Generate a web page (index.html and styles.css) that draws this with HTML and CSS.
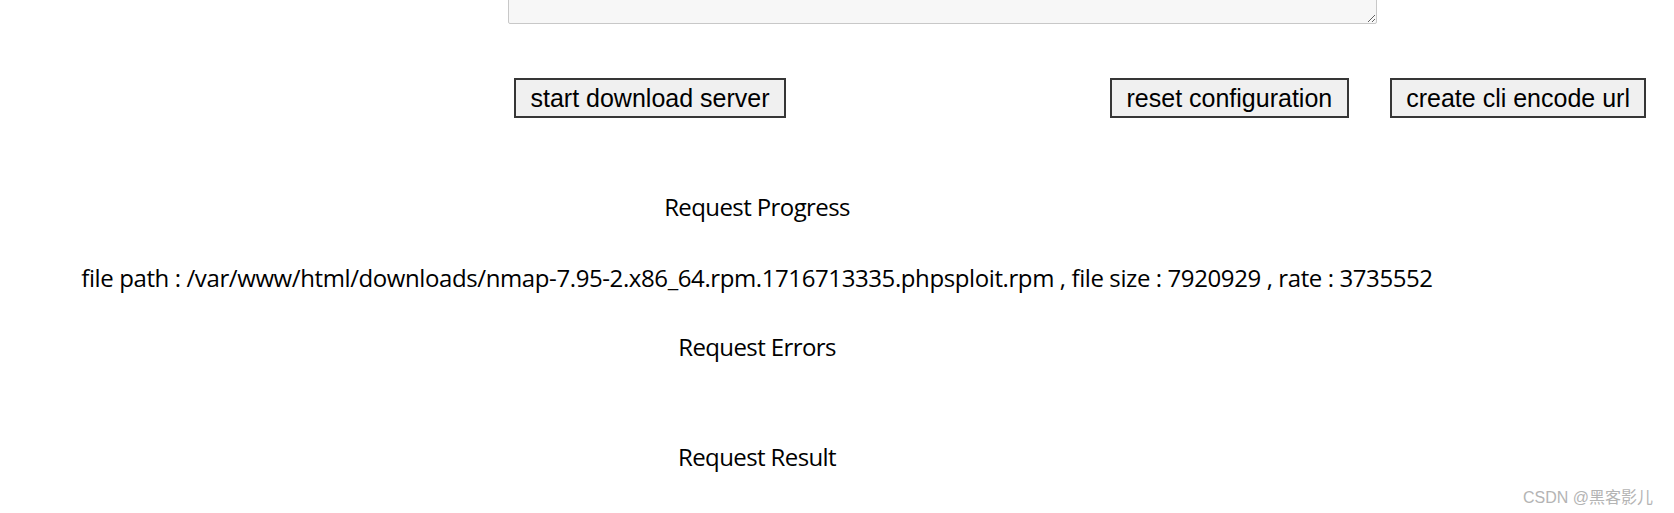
FILE: index.html
```html
<!DOCTYPE html>
<html>
<head>
<meta charset="utf-8">
<title>download server</title>
<link rel="stylesheet" href="styles.css">
</head>
<body>
<div class="page">
  <div class="config-wrap">
    <textarea class="config" spellcheck="false"></textarea>
  </div>

  <div class="actions">
    <button class="btn btn-start" type="button">start download server</button>
    <div class="actions-right">
      <button class="btn" type="button">reset configuration</button>
      <button class="btn" type="button">create cli encode url</button>
    </div>
  </div>

  <div class="report">
    <div class="heading heading-progress">Request Progress</div>
    <div class="line line-progress">file path : /var/www/html/downloads/nmap-7.95-2.x86_64.rpm.1716713335.phpsploit.rpm , file size : 7920929 , rate : 3735552</div>
    <div class="heading heading-errors">Request Errors</div>
    <div class="heading heading-result">Request Result</div>
  </div>

  <div class="watermark">CSDN @黑客影儿</div>
</div>
</body>
</html>
```

FILE: styles.css
```css
html, body {
  margin: 0;
  padding: 0;
  background: #ffffff;
}

.page {
  position: relative;
  width: 1674px;
  height: 513px;
  overflow: hidden;
  font-family: "Open Sans", "Noto Sans", sans-serif;
  color: #000;
}

.config-wrap {
  margin-left: 508px;
  width: 869px;
  height: 24px;
  overflow: hidden;
  display: flex;
  flex-direction: column;
  justify-content: flex-end;
}

.config {
  display: block;
  box-sizing: border-box;
  width: 869px;
  height: 120px;
  flex: none;
  margin: 0;
  background: #f7f7f7;
  border: 1px solid #c8c8c8;
  border-radius: 2px;
  resize: both;
}

.actions {
  display: flex;
  align-items: flex-start;
  margin-top: 54px;
  padding-left: 514px;
}

.actions-right {
  display: flex;
  gap: 41px;
  margin-left: 324px;
}

.btn {
  box-sizing: border-box;
  height: 40px;
  padding: 0 14.5px;
  margin: 0;
  font-family: "Liberation Sans", Arial, sans-serif;
  font-size: 25px;
  line-height: 36px;
  color: #000;
  background: #f0f0f0;
  border: 2px solid #363636;
  border-radius: 0;
  white-space: nowrap;
}

.report {
  width: 1514px;
  display: flex;
  flex-direction: column;
  align-items: center;
  font-size: 24px;
  letter-spacing: -0.6px;
  line-height: 32px;
}

.heading, .line {
  white-space: nowrap;
}

.line {
  letter-spacing: -0.4px;
}

.heading-progress { margin-top: 73px; }
.line-progress { margin-top: 39px; }
.heading-errors { margin-top: 37px; }
.heading-result { margin-top: 78px; }

.watermark {
  position: absolute;
  left: 1523px;
  top: 484px;
  font-family: "Liberation Sans", Arial, "Noto Sans CJK SC", sans-serif;
  font-size: 16px;
  color: #b4b4b4;
  white-space: nowrap;
}
```
